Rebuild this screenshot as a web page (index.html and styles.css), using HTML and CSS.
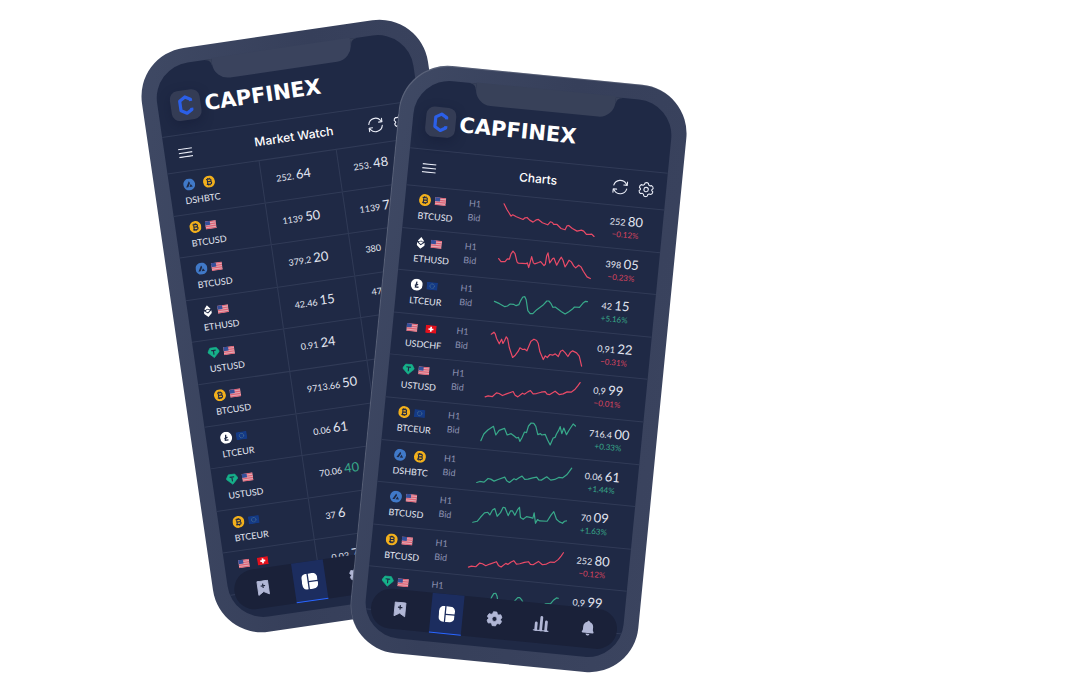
FILE: index.html
```html
<!DOCTYPE html>
<html lang="en">
<head>
<meta charset="utf-8">
<title>Capfinex</title>
<link rel="stylesheet" href="styles.css">
</head>
<body>
<svg class="sprite" aria-hidden="true">
  <symbol id="mark" viewBox="0 0 30 30"><path d="M20.5 11.6V9.8L15.3 6.8L9.6 10.2V19.8L15.3 23.2L20.5 20.2V18.4" fill="none" stroke="#2b5fe8" stroke-width="3.2" stroke-linejoin="round"/></symbol>
  <symbol id="menu" viewBox="0 0 14 10"><path d="M0 1H14M0 5H14M0 9H14" stroke="#e8ebf5" stroke-width="1.1"/></symbol>
  <symbol id="refresh" viewBox="0 0 16 16"><g fill="none" stroke="#e8ebf5" stroke-width="1.1" stroke-linecap="round" stroke-linejoin="round"><path d="M1.4 6.6A6.8 6.8 0 0 1 13.6 4.2L14.6 5.4M14.8 2.2V5.6H11.4M14.6 9.4A6.8 6.8 0 0 1 2.4 11.8L1.4 10.6M1.2 13.8V10.4H4.6"/></g></symbol>
  <symbol id="cog" viewBox="0 0 16 16"><g fill="none" stroke="#e8ebf5" stroke-width="1.1" stroke-linejoin="round"><path d="M6.3 1.6Q8 .4 9.7 1.6L10.2 3.2L11.5 3.9L13.1 3.5Q14.9 4.4 14.9 6.4L13.7 7.6V8.6L14.9 9.7Q14.8 11.7 13.1 12.5L11.5 12.1L10.2 12.8L9.7 14.4Q8 15.6 6.3 14.4L5.8 12.8L4.5 12.1L2.9 12.5Q1.2 11.7 1.1 9.7L2.3 8.6V7.6L1.1 6.4Q1.1 4.4 2.9 3.5L4.5 3.9L5.8 3.2Z"/><circle cx="8" cy="8" r="2.2"/></g></symbol>
  <symbol id="btc" viewBox="0 0 12 12"><circle cx="6" cy="6" r="6" fill="#f2b01c"/><path d="M3.4 3.5H7A1.2 1.2 0 0 1 7 6H4.5H7.2A1.3 1.3 0 0 1 7.2 8.6H3.4M4.5 3.5V8.6M5.2 2.3V3.5M6.7 2.3V3.5M5.2 8.6V9.8M6.7 8.6V9.8" fill="none" stroke="#1f2945" stroke-width="1.1"/></symbol>
  <symbol id="dsh" viewBox="0 0 12 12"><circle cx="6" cy="6" r="6" fill="#4079c8"/><path d="M2.6 8.6L6 2.8L7 4.6L4.8 8.6ZM7.5 5.8L9.3 8.6H5.9Z" fill="#1f2945"/></symbol>
  <symbol id="ltc" viewBox="0 0 12 12"><circle cx="6" cy="6" r="6" fill="#fff"/><path d="M6 3L4.9 8.4H8M4.1 6.9L7.4 5.5" fill="none" stroke="#1f2945" stroke-width="1.3"/></symbol>
  <symbol id="eth" viewBox="0 0 12 12"><path d="M6 0L9.2 4L7.9 4.7L6 3.5L4.1 4.7L2.8 4ZM6 4.3L8.2 5.7L6 7.2L3.8 5.7ZM2.2 5.6L6 8.4L9.8 5.6V8.4L6 12L2.2 8.4Z" fill="#fff"/></symbol>
  <symbol id="ust" viewBox="0 0 12 12"><path d="M2.8 1H9.2L12 5.2L6 11L0 5.2Z" fill="#16b18a" stroke="#16b18a" stroke-width=".6" stroke-linejoin="round"/><path d="M3.7 3.7H8.3M6 3.7V8" stroke="#1f2945" stroke-width="1.1"/></symbol>
  <symbol id="us" viewBox="0 0 11 8"><path d="M0 0H11V8H0Z" fill="#e2aab4"/><path d="M0 .6H11M0 2.9H11M0 5.1H11M0 7.4H11" stroke="#dd6376" stroke-width="1.2"/><path d="M0 0H5V4H0Z" fill="#34509a"/></symbol>
  <symbol id="eu" viewBox="0 0 11 8"><path d="M0 0H11V8H0Z" fill="#143a86"/><circle cx="5.5" cy="4" r="2.2" fill="none" stroke="#5c7f96" stroke-width=".8" stroke-dasharray=".8 .5"/></symbol>
  <symbol id="ch" viewBox="0 0 11 8"><path d="M0 0H11V8H0Z" fill="#e3101c"/><path d="M5.5 1.5V6.5M3 4H8" stroke="#fff" stroke-width="1.7"/></symbol>

  <symbol id="bookmark" viewBox="0 0 16 18"><path d="M2 1H14V16.5L8 13L2 16.5Z" fill="#b1b7d6" stroke="#b1b7d6" stroke-linejoin="round"/><path d="M8 4V9M5.5 6.5H10.5" stroke="#1a2139" stroke-width="1.3"/></symbol>
  <symbol id="layout" viewBox="0 0 16 16"><path d="M5.8 0V16A5 5 0 0 1 0 11V5A5 5 0 0 1 5.8 0ZM7.1 0H11A5 5 0 0 1 16 5V7.6H7.1ZM7.1 8.9H16V11A5 5 0 0 1 11 16H7.1Z" fill="#fff"/></symbol>
  <symbol id="gear" viewBox="0 0 16 16"><path d="M6.3 1H9.7L10.3 3L11.8 3.8L13.8 3.3L15.4 6.1L14 7.7V8.5L15.4 10L13.8 12.8L11.8 12.3L10.3 13.1L9.7 15H6.3L5.7 13.1L4.2 12.3L2.2 12.8L.6 10L2 8.5V7.7L.6 6.1L2.2 3.3L4.2 3.8L5.7 3ZM8 5.6A2.5 2.5 0 1 0 8 10.6A2.5 2.5 0 1 0 8 5.6Z" fill="#b1b7d6" fill-rule="evenodd" stroke="#b1b7d6" stroke-width=".8" stroke-linejoin="round"/></symbol>
  <symbol id="bars" viewBox="0 0 16 16"><path d="M3 8V15M8 2V15M13 6V15" stroke="#b1b7d6" stroke-width="2.8" stroke-linecap="round"/><path d="M.5 15.2H15.5" stroke="#b1b7d6" stroke-width="1.4" stroke-linecap="round"/></symbol>
  <symbol id="bell" viewBox="0 0 16 16"><path d="M8 .6C8.8.6 9.2 1.1 9.2 1.8C11.8 2.5 13 4.6 13 7V10L14 12.2Q14 13 13 13H3Q2 13 2 12.2L3 10V7C3 4.6 4.2 2.5 6.8 1.8C6.8 1.1 7.2.6 8 .6ZM6 13.8H10Q9.6 15.6 8 15.6Q6.4 15.6 6 13.8Z" fill="#b1b7d6"/></symbol>
</svg>

<main class="stage">
  <section class="phone phone-back" aria-label="Market Watch">
    <div class="notch"></div>
    <div class="screen">
      <header class="brand"><span class="tile"><svg><use href="#mark"/></svg></span><span class="wordmark">CAPFINEX</span></header>
      <div class="toolbar">
        <button class="menu" aria-label="Menu"><svg><use href="#menu"/></svg></button>
        <h2>Market Watch</h2>
        <div class="tools"><button aria-label="Refresh"><svg><use href="#refresh"/></svg></button><button aria-label="Settings"><svg><use href="#cog"/></svg></button></div>
      </div>
      <table class="rows watch">
        <tbody>
          <tr><td class="pair"><div class="icons wide"><svg><use href="#dsh"/></svg><svg><use href="#btc"/></svg></div>DSHBTC</td><td>252. <b>64</b></td><td>253. <b>48</b></td></tr>
          <tr><td class="pair"><div class="icons"><svg><use href="#btc"/></svg><svg class="flag"><use href="#us"/></svg></div>BTCUSD</td><td>1139 <b>50</b></td><td>1139 <b>73</b></td></tr>
          <tr><td class="pair"><div class="icons"><svg><use href="#dsh"/></svg><svg class="flag"><use href="#us"/></svg></div>BTCUSD</td><td>379.2 <b>20</b></td><td>380</td></tr>
          <tr><td class="pair"><div class="icons"><svg><use href="#eth"/></svg><svg class="flag"><use href="#us"/></svg></div>ETHUSD</td><td>42.46 <b>15</b></td><td>47</td></tr>
          <tr><td class="pair"><div class="icons"><svg><use href="#ust"/></svg><svg class="flag"><use href="#us"/></svg></div>USTUSD</td><td>0.91 <b>24</b></td><td></td></tr>
          <tr><td class="pair"><div class="icons"><svg><use href="#btc"/></svg><svg class="flag"><use href="#us"/></svg></div>BTCUSD</td><td>9713.66 <b>50</b></td><td></td></tr>
          <tr><td class="pair"><div class="icons"><svg><use href="#ltc"/></svg><svg class="flag"><use href="#eu"/></svg></div>LTCEUR</td><td>0.06 <b>61</b></td><td></td></tr>
          <tr><td class="pair"><div class="icons"><svg><use href="#ust"/></svg><svg class="flag"><use href="#us"/></svg></div>USTUSD</td><td>70.06 <b class="up">40</b></td><td></td></tr>
          <tr><td class="pair"><div class="icons"><svg><use href="#btc"/></svg><svg class="flag"><use href="#eu"/></svg></div>BTCEUR</td><td>37 <b>6</b></td><td></td></tr>
          <tr><td class="pair"><div class="icons wide"><svg class="flag"><use href="#us"/></svg><svg class="flag"><use href="#ch"/></svg></div></td><td>0.03 <b>7</b></td><td></td></tr>
        </tbody>
      </table>
      <nav class="tabs">
        <button aria-label="Saved"><svg><use href="#bookmark"/></svg></button><button class="active" aria-label="Overview"><svg><use href="#layout"/></svg></button><button aria-label="Settings"><svg><use href="#gear"/></svg></button><button aria-label="Statistics"><svg><use href="#bars"/></svg></button><button aria-label="Alerts"><svg><use href="#bell"/></svg></button>
      </nav>
    </div>
  </section>

  <section class="phone phone-front" aria-label="Charts">
    <div class="notch"></div>
    <div class="screen">
      <header class="brand"><span class="tile"><svg><use href="#mark"/></svg></span><span class="wordmark">CAPFINEX</span></header>
      <div class="toolbar">
        <button class="menu" aria-label="Menu"><svg><use href="#menu"/></svg></button>
        <h2>Charts</h2>
        <div class="tools"><button aria-label="Refresh"><svg><use href="#refresh"/></svg></button><button aria-label="Settings"><svg><use href="#cog"/></svg></button></div>
      </div>
      <ul class="rows charts">
        <li><div class="pair"><div class="icons"><svg><use href="#btc"/></svg><svg class="flag"><use href="#us"/></svg></div>BTCUSD</div><div class="frame">H1<br>Bid</div>
          <svg class="spark down"><path transform="translate(0 9) rotate(-5.6) scale(.3333) translate(-343 -68)" d="M343,68 352,86 364,105 369,101 380,107 400,115 406,110 412,109 420,117 430,123 440,116 446,115 458,125 474,131 482,122 488,124 492,130 502,130 514,142 526,146 532,134 537,133 548,142 562,150 575,147 582,150 590,160 600,160 606,159 613,166"/></svg>
          <div class="price"><span>252 <b>80</b></span><small class="down">−0.12%</small></div></li>
        <li><div class="pair"><div class="icons"><svg><use href="#eth"/></svg><svg class="flag"><use href="#us"/></svg></div>ETHUSD</div><div class="frame">H1<br>Bid</div>
          <svg class="spark down"><path transform="translate(0 21) rotate(-5.6) scale(.3333) translate(-327 -230)" d="M327,230 334,239 346,239 353,231 359,232 364,216 370,208 376,215 382,240 386,244 410,245 413,243 417,257 421,243 426,224 431,243 435,246 447,242 453,239 463,251 467,247 471,222 475,213 480,243 489,230 493,229 501,250 509,235 515,226 520,235 526,255 532,246 538,235 545,240 552,252 558,258 567,250 574,255 581,268 592,285 602,290"/></svg>
          <div class="price"><span>398 <b>05</b></span><small class="down">−0.23%</small></div></li>
        <li><div class="pair"><div class="icons"><svg><use href="#ltc"/></svg><svg class="flag"><use href="#eu"/></svg></div>LTCEUR</div><div class="frame">H1<br>Bid</div>
          <svg class="spark up"><path id="wave" transform="translate(0 22) rotate(-5.6) scale(.3333) translate(-315 -360)" d="M315,360 330,367 346,376 354,374 362,368 372,369 380,373 388,370 394,357 400,347 406,346 410,355 415,388 422,397 430,397 442,385 460,372 472,359 478,359 484,366 490,378 497,377 505,383 516,391 527,398 538,391 548,384 555,377 570,378 580,366 588,360 594,361"/></svg>
          <div class="price"><span>42 <b>15</b></span><small class="up">+5.16%</small></div></li>
        <li><div class="pair"><div class="icons wide"><svg class="flag"><use href="#us"/></svg><svg class="flag"><use href="#ch"/></svg></div>USDCHF</div><div class="frame">H1<br>Bid</div>
          <svg class="spark down"><path transform="translate(0 12) rotate(-5.6) scale(.3333) translate(-364 -67)" d="M364,67 372,61 376,66 380,80 388,96 395,82 399,95 404,86 409,75 413,80 418,107 428,137 436,130 445,118 450,108 458,113 465,112 471,117 476,105 483,88 492,82 500,86 505,95 510,120 520,143 526,132 532,137 540,128 548,130 556,126 565,134 572,118 578,115 586,123 594,134 602,121 608,117 620,123 628,133 635,163"/></svg>
          <div class="price"><span>0,91 <b>22</b></span><small class="down">−0.31%</small></div></li>
        <li><div class="pair"><div class="icons"><svg><use href="#ust"/></svg><svg class="flag"><use href="#us"/></svg></div>USTUSD</div><div class="frame">H1<br>Bid</div>
          <svg class="spark down"><path id="climb" transform="translate(0 33) rotate(-5.6) scale(.3333) translate(-346 -257)" d="M346,257 355,254 368,256 380,245 388,247 398,253 410,248 430,241 436,252 444,257 458,246 464,249 474,242 482,238 490,248 500,247 514,243 526,241 532,249 540,250 556,240 568,250 580,248 592,242 604,243 616,234 624,224 631,214"/></svg>
          <div class="price"><span>0,9 <b>99</b></span><small class="down">−0.01%</small></div></li>
        <li><div class="pair"><div class="icons"><svg><use href="#btc"/></svg><svg class="flag"><use href="#eu"/></svg></div>BTCEUR</div><div class="frame">H1<br>Bid</div>
          <svg class="spark up"><path transform="translate(0 34) rotate(-5.6) scale(.3333) translate(-333 -388)" d="M333,388 342,368 354,356 371,345 378,371 388,357 404,351 412,371 424,367 434,375 440,380 446,378 450,390 456,380 464,362 470,364 476,344 484,335 492,336 498,345 504,370 512,367 516,371 526,369 533,385 541,401 550,380 556,378 560,368 566,358 571,346 576,367 582,350 590,370 598,356 610,338 617,344"/></svg>
          <div class="price"><span>716.4 <b>00</b></span><small class="up">+0.33%</small></div></li>
        <li><div class="pair"><div class="icons wide"><svg><use href="#dsh"/></svg><svg><use href="#btc"/></svg></div>DSHBTC</div><div class="frame">H1<br>Bid</div>
          <svg class="spark up"><use href="#climb"/></svg>
          <div class="price"><span>0.06 <b>61</b></span><small class="up">+1.44%</small></div></li>
        <li><div class="pair"><div class="icons"><svg><use href="#dsh"/></svg><svg class="flag"><use href="#us"/></svg></div>BTCUSD</div><div class="frame">H1<br>Bid</div>
          <svg class="spark up"><path transform="translate(0 31) rotate(-5.6) scale(.3333) translate(-339 -244)" d="M339,244 352,241 362,229 374,216 384,214 390,222 398,207 405,203 412,226 422,215 430,199 436,201 445,224 452,210 458,210 465,223 474,205 479,199 482,230 490,235 500,227 514,230 519,232 523,216 527,247 533,236 540,240 562,241 574,222 582,212 590,235 598,242 608,247 614,241 620,240"/></svg>
          <div class="price"><span>70 <b>09</b></span><small class="up">+1.63%</small></div></li>
        <li><div class="pair"><div class="icons"><svg><use href="#btc"/></svg><svg class="flag"><use href="#us"/></svg></div>BTCUSD</div><div class="frame">H1<br>Bid</div>
          <svg class="spark down"><use href="#climb"/></svg>
          <div class="price"><span>252 <b>80</b></span><small class="down">−0.12%</small></div></li>
        <li><div class="pair"><div class="icons"><svg><use href="#ust"/></svg><svg class="flag"><use href="#us"/></svg></div></div><div class="frame">H1</div>
          <svg class="spark up"><use href="#wave"/></svg>
          <div class="price"><span>0,9 <b>99</b></span></div></li>
      </ul>
      <nav class="tabs">
        <button aria-label="Saved"><svg><use href="#bookmark"/></svg></button><button class="active" aria-label="Overview"><svg><use href="#layout"/></svg></button><button aria-label="Settings"><svg><use href="#gear"/></svg></button><button aria-label="Statistics"><svg><use href="#bars"/></svg></button><button aria-label="Alerts"><svg><use href="#bell"/></svg></button>
      </nav>
    </div>
  </section>
</main>
</body>
</html>
```
FILE: styles.css
```css
* { box-sizing: border-box; }

body {
  margin: 0;
  background: #fff;
  font-family: Lato, "Liberation Sans", sans-serif;
}

.sprite { position: absolute; width: 0; height: 0; }

.stage {
  position: relative;
  min-height: 100vh;
  overflow: hidden;
}

/* Device */
.phone {
  position: absolute;
  width: 289px;
  height: 590px;
  padding: 15px;
  border-radius: 49px;
  background: linear-gradient(100deg, #3f4964, #363f5a 45%, #3b445f);
  color: #e4e7f2;
}
.phone-back { left: 176px; top: 31px; transform: rotate(-8.3deg); }
.phone-front {
  left: 374px;
  top: 74px;
  transform: rotate(5.6deg);
  box-shadow: inset 1px 1px 0 rgba(255, 255, 255, .14);
}

.screen {
  position: relative;
  display: flex;
  flex-direction: column;
  height: 100%;
  border-radius: 36px;
  overflow: hidden;
  background: #1f2945;
}

.notch {
  position: absolute;
  z-index: 1;
  top: 14px;
  left: 50%;
  width: 140px;
  height: 22px;
  margin-left: -70px;
  border-radius: 0 0 16px 16px;
  background: #384159;
}
.phone-back .notch { background: #3a435d; }
.notch::before,
.notch::after {
  content: "";
  position: absolute;
  top: 1px;
  width: 6px;
  height: 6px;
}
.notch::before { right: 100%; background: radial-gradient(circle at 0 100%, transparent 5px, #384159 6px); }
.notch::after { left: 100%; background: radial-gradient(circle at 100% 100%, transparent 5px, #384159 6px); }

/* Header */
.brand {
  display: flex;
  flex: 0 0 70px;
  align-items: flex-end;
  gap: 4px;
  padding: 0 13px 13px;
}
.tile {
  width: 30px;
  height: 30px;
  border-radius: 8px;
  background: #343c55;
  box-shadow: 0 4px 12px rgba(15, 20, 45, .35);
}
.tile svg { display: block; width: 30px; height: 30px; }
.wordmark {
  color: #fff;
  font: bold 21px/28px "DejaVu Sans", sans-serif;
}

.toolbar {
  display: grid;
  grid-template-columns: 1fr auto 1fr;
  flex: 0 0 37px;
  align-items: center;
  padding: 0 12px 0 14px;
  border-top: 1px solid #313b57;
}
.toolbar h2 { margin: 0; color: #fff; font: 500 12px/16px Inter, sans-serif; }
.toolbar svg { display: block; width: 16px; height: 16px; }
.toolbar .menu svg { width: 14px; height: 10px; }
.tools { display: flex; justify-content: flex-end; gap: 10px; }

button { padding: 0; border: 0; background: none; }

/* Instrument rows */
.rows {
  flex: 0 0 427px;
  height: 427px;
  margin: 0;
  padding: 0;
  list-style: none;
  border-bottom: 1px solid #313b57;
  font-size: 9px;
}
.watch { display: block; }
.watch tbody, .charts { display: grid; grid-template-rows: repeat(10, minmax(0, 1fr)); }
.watch tbody { height: 100%; }
.watch tr, .charts li {
  display: grid;
  border-top: 1px solid #313b57;
}
.watch tr { grid-template-columns: 92px 78px 1fr; }
.charts li { grid-template-columns: 64px 35px 107px 1fr; }

.pair { padding: 7px 0 0 14px; line-height: 12px; }
.icons { display: flex; align-items: center; gap: 4px; height: 12px; margin-bottom: 4px; }
.icons.wide { gap: 8px; }
.icons svg { width: 12px; height: 12px; }
.icons .flag { width: 11px; height: 8px; }

.watch td { padding-bottom: 0; }
.watch td:not(.pair) {
  padding: 10px 0 0 14px;
  border-left: 1px solid #313b57;
  line-height: 16px;
}

.frame { padding-top: 5px; color: #8d92b2; line-height: 14px; }

.price {
  display: flex;
  flex-direction: column;
  align-items: center;
  justify-self: start;
  padding-top: 7px;
  line-height: 14px;
  white-space: nowrap;
}
.price small { font-size: 8px; line-height: 10px; }
b { font-size: 13px; font-weight: 400; }
.up { color: #38a98a; }
.down { color: #d9445f; }

.spark {
  width: 100%;
  height: 40px;
  overflow: visible;
  fill: none;
  stroke: currentColor;
  stroke-width: 3.6;
  stroke-linejoin: round;
  stroke-linecap: round;
}
.spark.down { color: #ea4a67; }

/* Tab bar */
.tabs {
  position: absolute;
  right: 6px;
  bottom: 9px;
  left: 6px;
  display: flex;
  justify-content: space-between;
  height: 40px;
  padding: 0 13px;
  border-radius: 20px;
  background: #1a2139;
}
.tabs button { display: grid; place-items: center; width: 32px; }
.tabs svg { width: 16px; height: 16px; }
.tabs .active { border-bottom: 1px solid #2a66ff; background: #1c2d5f; }
```
